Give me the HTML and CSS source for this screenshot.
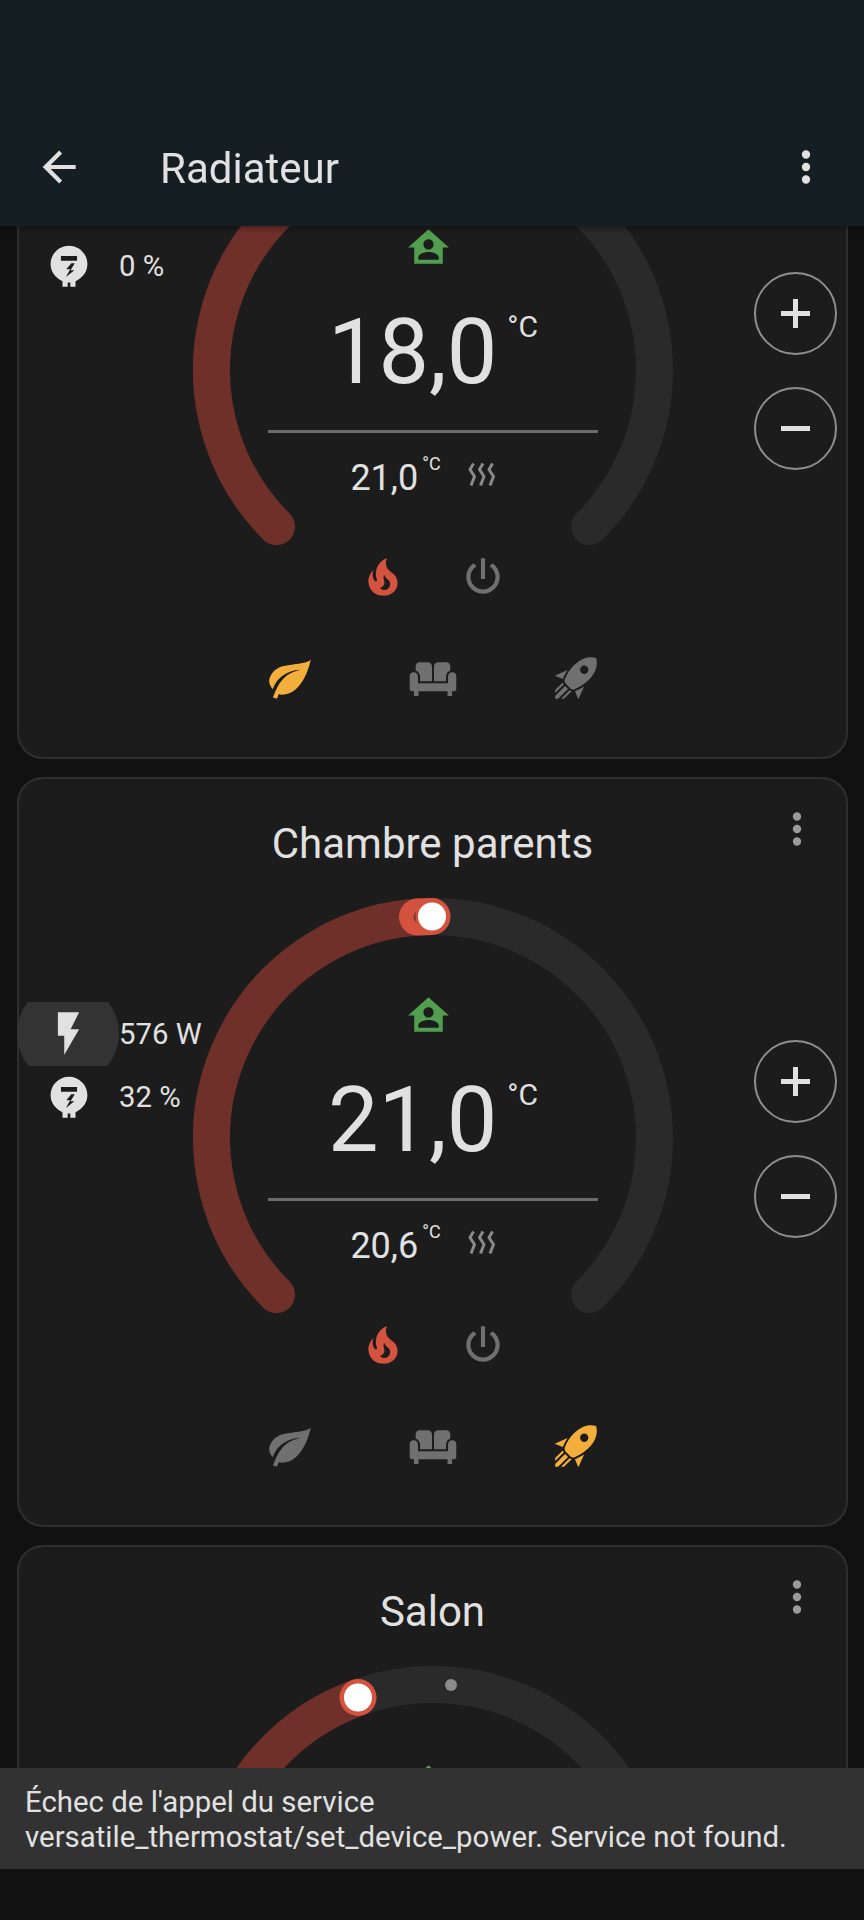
FILE: index.html
```html
<!DOCTYPE html>
<html lang="fr">
<head>
    <meta charset="UTF-8">
    <title>Radiateur</title>
    <link rel="stylesheet" href="styles.css">
</head>
<body>
    <svg class="defs" width="0" height="0">
        <symbol id="i-back" viewBox="0 0 24 24"><path d="M20,11V13H8L13.5,18.5L12.08,19.92L4.16,12L12.08,4.08L13.5,5.5L8,11H20Z"/></symbol>
        <symbol id="i-dots" viewBox="0 0 24 24"><path d="M12,16A2,2 0 0,1 14,18A2,2 0 0,1 12,20A2,2 0 0,1 10,18A2,2 0 0,1 12,16M12,10A2,2 0 0,1 14,12A2,2 0 0,1 12,14A2,2 0 0,1 10,12A2,2 0 0,1 12,10M12,4A2,2 0 0,1 14,6A2,2 0 0,1 12,8A2,2 0 0,1 10,6A2,2 0 0,1 12,4Z"/></symbol>
        <symbol id="i-flash" viewBox="0 0 24 24"><path d="M7,2V13H10V22L17,10H13L17,2H7Z"/></symbol>
        <symbol id="i-meter" viewBox="0 0 24 24"><path fill-rule="evenodd" d="M12 1.4C17.3 1.4 21.6 5.7 21.6 11C21.6 14.8 19.4 18 15.4 20V22.8H12.7V20.6H11.3V22.8H8.6V20C4.6 18 2.4 14.8 2.4 11C2.4 5.7 6.7 1.4 12 1.4ZM7.8 6.8V9.3H16.2V6.8ZM13.2 10.5L10.6 13.7H12.6L10.4 17.8L14.8 14.2H12.8L15 10.5Z"/></symbol>
        <symbol id="i-home" viewBox="0 0 24 24"><path fill-rule="evenodd" d="M12 3L2 12H5V20H19V12H22ZM12 8C13.4 8 14.5 9.1 14.5 10.5C14.5 11.9 13.4 13 12 13C10.6 13 9.5 11.9 9.5 10.5C9.5 9.1 10.6 8 12 8ZM7 18V16.8C7 15.1 10.3 14.2 12 14.2C13.7 14.2 17 15.1 17 16.8V18Z"/></symbol>
        <symbol id="i-fire" viewBox="0 0 24 24"><path d="M17.66 11.2C17.43 10.9 17.15 10.64 16.89 10.38C16.22 9.78 15.46 9.35 14.82 8.72C13.33 7.26 13 4.85 13.95 3C13 3.23 12.17 3.75 11.46 4.32C8.87 6.4 7.85 10.07 9.07 13.22C9.11 13.32 9.15 13.42 9.15 13.55C9.15 13.77 9 13.97 8.8 14.05C8.57 14.15 8.33 14.09 8.14 13.93C8.08 13.88 8.04 13.83 8 13.76C6.87 12.33 6.69 10.28 7.45 8.64C5.78 10 4.87 12.3 5 14.47C5.06 14.97 5.12 15.47 5.29 15.97C5.43 16.57 5.7 17.17 6 17.7C7.08 19.43 8.95 20.67 10.96 20.92C13.1 21.19 15.39 20.8 17.03 19.32C18.86 17.66 19.5 15 18.56 12.72L18.43 12.46C18.22 12 17.66 11.2 17.66 11.2M14.5 17.5C14.22 17.74 13.76 18 13.4 18.1C12.28 18.5 11.16 17.94 10.5 17.28C11.69 17 12.4 16.12 12.61 15.23C12.78 14.43 12.46 13.77 12.33 13C12.21 12.26 12.23 11.63 12.5 10.94C12.69 11.32 12.89 11.7 13.13 12C13.9 13 15.11 13.44 15.37 14.8C15.41 14.94 15.43 15.08 15.43 15.23C15.46 16.05 15.1 16.95 14.5 17.5H14.5Z"/></symbol>
        <symbol id="i-power" viewBox="0 0 24 24"><path d="M16.56,5.44L15.11,6.89C16.84,7.94 18,9.83 18,12A6,6 0 0,1 12,18A6,6 0 0,1 6,12C6,9.83 7.16,7.94 8.88,6.88L7.44,5.44C5.36,6.88 4,9.28 4,12A8,8 0 0,0 12,20A8,8 0 0,0 20,12C20,9.28 18.64,6.88 16.56,5.44M13,3H11V13H13"/></symbol>
        <symbol id="i-leaf" viewBox="0 0 24 24"><path d="M17,8C8,10 5.9,16.17 3.82,21.34L5.71,22L6.66,19.7C7.14,19.87 7.64,20 8,20C19,20 22,3 22,3C21,5 14,5.25 9,6.25C4,7.25 2,11.5 2,13.5C2,15.5 3.75,17.25 3.75,17.25C7,8 17,8 17,8Z"/></symbol>
        <symbol id="i-sofa" viewBox="0 0 50 50">
            <path d="M11.5 9.3H19.5C22.3 9.3 24 11 24 13.5V28.3H12V24C12 21 10.5 18.5 7.7 17.5V13.5C7.7 11 9 9.3 11.5 9.3Z"/>
            <path d="M38.5 9.3H30.5C27.7 9.3 26 11 26 13.5V28.3H38V24C38 21 39.5 18.5 42.3 17.5V13.5C42.3 11 41 9.3 38.5 9.3Z"/>
            <path d="M1.7 23C1.7 20.5 3.5 19.3 5.5 19.3C8.5 19.3 10 21 10 24V30.3H40V24C40 21 41.5 19.3 44.5 19.3C46.5 19.3 48.3 20.5 48.3 23V36C48.3 37.5 47 38.3 45 38.3H44V43H39.5V38.3H10.5V43H6V38.3H5C3 38.3 1.7 37.5 1.7 36Z"/>
        </symbol>
        <symbol id="i-rocket" viewBox="0 0 24 24"><path d="M13.13 22.19L11.5 18.36C13.07 17.78 14.54 17 15.9 16.09L13.13 22.19M5.64 12.5L1.81 10.87L7.91 8.1C7 9.46 6.22 10.93 5.64 12.5M21.61 2.39C21.61 2.39 16.66 .269 11 5.93C8.81 8.12 7.5 10.53 6.65 12.64C6.37 13.39 6.56 14.21 7.11 14.77L9.24 16.89C9.79 17.45 10.61 17.63 11.36 17.35C13.5 16.53 15.88 15.19 18.07 13C23.73 7.34 21.61 2.39 21.61 2.39M14.54 9.46C13.76 8.68 13.76 7.41 14.54 6.63S16.59 5.85 17.37 6.63C18.14 7.41 18.15 8.68 17.37 9.46C16.59 10.24 15.32 10.24 14.54 9.46M6.24 22L9.88 18.36C9.54 18.27 9.21 18.12 8.91 17.91L4.83 22H6.24M2 22H3.41L8.18 17.24L6.76 15.83L2 20.59V22M2 19.17L6.09 15.09C5.88 14.79 5.73 14.47 5.64 14.12L2 17.76V19.17Z"/></symbol>
        <symbol id="i-heat" viewBox="0 0 27 25"><path d="M5.5 1.5L2 7.5L6.5 14.5L3 23.5M15 1.5L11.5 7.5L16 14.5L12.5 23.5M24.5 1.5L21 7.5L25.5 14.5L22 23.5"/></symbol>
    </svg>

    <header class="topbar">
        <svg class="ic-50 back"><use href="#i-back"/></svg>
        <h1 class="page-title">Radiateur</h1>
        <svg class="ic-50"><use href="#i-dots"/></svg>
    </header>

    <main class="cards">
        <section class="card">
            <h2 class="card-title">Chambre</h2>
            <svg class="ic-50 card-more"><use href="#i-dots"/></svg>
            <div class="card-body">
                <div class="attrs">
                    <div class="attr"><span class="attr-icon"><svg class="ic-meter"><use href="#i-meter"/></svg></span><span>0 %</span></div>
                </div>
                <div class="gauge">
                    <svg class="dial" viewBox="0 0 480 420">
                        <path class="track" d="M83.4 396.6A221.5 221.5 0 1 1 396.6 396.6"/>
                        <path class="heat-low" d="M83.4 396.6A221.5 221.5 0 0 1 165 31.5"/>
                    </svg>
                    <div class="info">
                        <svg class="ic-home"><use href="#i-home"/></svg>
                        <div class="target"><span class="target-val">18,0</span><span class="target-unit">°C</span></div>
                        <div class="rule"></div>
                        <div class="current"><span class="current-val">21,0</span><span class="current-unit">°C</span><svg class="ic-heat"><use href="#i-heat"/></svg></div>
                    </div>
                </div>
                <div class="steppers">
                    <div class="stepper plus"></div>
                    <div class="stepper"></div>
                </div>
            </div>
            <div class="modes">
                <svg class="ic-50 red"><use href="#i-fire"/></svg>
                <svg class="ic-50 off"><use href="#i-power"/></svg>
            </div>
            <div class="presets">
                <svg class="ic-50 amber"><use href="#i-leaf"/></svg>
                <svg class="ic-50 off"><use href="#i-sofa"/></svg>
                <svg class="ic-50 off"><use href="#i-rocket"/></svg>
            </div>
        </section>

        <section class="card">
            <h2 class="card-title">Chambre parents</h2>
            <svg class="ic-50 card-more"><use href="#i-dots"/></svg>
            <div class="card-body">
                <div class="attrs">
                    <div class="attr"><span class="attr-icon pressed"><svg class="ic-flash"><use href="#i-flash"/></svg></span><span>576 W</span></div>
                    <div class="attr"><span class="attr-icon"><svg class="ic-meter"><use href="#i-meter"/></svg></span><span>32 %</span></div>
                </div>
                <div class="gauge">
                    <svg class="dial" viewBox="0 0 480 420">
                        <path class="track" d="M83.4 396.6A221.5 221.5 0 1 1 396.6 396.6"/>
                        <path class="heat-low" d="M83.4 396.6A221.5 221.5 0 0 1 239 18.5"/>
                        <path class="heat-on" d="M224.5 19A221.5 221.5 0 0 1 239 18.5"/>
                        <circle class="now-dim" cx="227" cy="19" r="6.5"/>
                        <circle class="ring" cx="239" cy="18.5" r="16.5"/>
                        <circle class="thumb" cx="239" cy="18.5" r="14"/>
                    </svg>
                    <div class="info">
                        <svg class="ic-home"><use href="#i-home"/></svg>
                        <div class="target"><span class="target-val">21,0</span><span class="target-unit">°C</span></div>
                        <div class="rule"></div>
                        <div class="current"><span class="current-val">20,6</span><span class="current-unit">°C</span><svg class="ic-heat"><use href="#i-heat"/></svg></div>
                    </div>
                </div>
                <div class="steppers">
                    <div class="stepper plus"></div>
                    <div class="stepper"></div>
                </div>
            </div>
            <div class="modes">
                <svg class="ic-50 red"><use href="#i-fire"/></svg>
                <svg class="ic-50 off"><use href="#i-power"/></svg>
            </div>
            <div class="presets">
                <svg class="ic-50 off"><use href="#i-leaf"/></svg>
                <svg class="ic-50 off"><use href="#i-sofa"/></svg>
                <svg class="ic-50 amber"><use href="#i-rocket"/></svg>
            </div>
        </section>

        <section class="card">
            <h2 class="card-title">Salon</h2>
            <svg class="ic-50 card-more"><use href="#i-dots"/></svg>
            <div class="card-body">
                <div class="attrs"></div>
                <div class="gauge">
                    <svg class="dial" viewBox="0 0 480 420">
                        <path class="track" d="M83.4 396.6A221.5 221.5 0 1 1 396.6 396.6"/>
                        <path class="heat-low" d="M83.4 396.6A221.5 221.5 0 0 1 165 31.5"/>
                        <circle class="now" cx="258" cy="19" r="6"/>
                        <circle class="ring" cx="165" cy="31.5" r="18.5"/>
                        <circle class="thumb" cx="165" cy="31.5" r="14"/>
                    </svg>
                    <div class="info">
                        <svg class="ic-home"><use href="#i-home"/></svg>
                    </div>
                </div>
            </div>
        </section>
    </main>

    <div class="toast">Échec de l'appel du service versatile_thermostat/set_device_power. Service not found.</div>
    <div class="navbar"></div>
</body>
</html>
```

FILE: styles.css
```css
* {
    box-sizing: border-box;
}

html, body {
    height: 100%;
}

body {
    margin: 0;
    background-color: #111111;
    color: #e1e1e1;
    font-family: Roboto, "Noto Sans", sans-serif;
    overflow: hidden;
}

svg {
    fill: currentColor;
    display: block;
}

.defs {
    position: absolute;
}

.ic-50 {
    width: 50px;
    height: 50px;
    flex: none;
}

.red { color: #d4533f; }
.off { color: #707070; }
.amber { color: #f4ae3c; }

/* top bar sits over the scrolled cards */
.topbar {
    position: fixed;
    top: 0;
    left: 0;
    right: 0;
    height: 226px;
    z-index: 5;
    display: flex;
    align-items: flex-end;
    padding: 0 33px 34px 34px;
    background-color: #141e23;
    box-shadow: 0 2px 6px rgba(0, 0, 0, 0.4);
}

.page-title {
    flex: 1;
    margin: 0 0 -2px 76px;
    font-size: 42px;
    font-weight: 400;
    line-height: 50px;
}

.cards {
    display: flex;
    flex-direction: column;
    gap: 18px;
    padding: 9px 16px 0 17px;
}

.card {
    position: relative;
    flex: none;
    height: 750px;
    background-color: #1c1c1c;
    border: 2px solid #2f2f2f;
    border-radius: 26px;
}

.card-title {
    height: 119px;
    margin: 0;
    padding-top: 40px;
    text-align: center;
    font-size: 42px;
    font-weight: 400;
    line-height: 50px;
}

.card-more {
    position: absolute;
    top: 25px;
    right: 24px;
    color: #9b9b9b;
}

.card-body {
    display: grid;
    grid-template-columns: 174px 480px 1fr;
    height: 422px;
}

.attrs {
    margin-left: -2px;
    padding-top: 104px;
}

.attr {
    display: flex;
    align-items: center;
    height: 63px;
    font-size: 29.3px;
    white-space: nowrap;
}

.attr-icon {
    display: flex;
    align-items: center;
    justify-content: center;
    width: 102px;
    height: 64px;
    flex: none;
}

.pressed {
    background-color: #333333;
    clip-path: circle(51px at center);
}

.ic-flash {
    width: 51px;
    height: 51px;
}

.ic-meter {
    width: 46px;
    height: 46px;
    margin-left: 2px;
}

.gauge {
    position: relative;
}

.dial {
    position: absolute;
    top: 0;
    left: 0;
    width: 480px;
    height: 420px;
}

.dial path {
    fill: none;
    stroke-width: 37;
    stroke-linecap: round;
}

.dial .track { stroke: #2a2a2a; }
.dial .heat-low { stroke: #6f302a; }
.dial .heat-on { stroke: #d4533f; }
.dial .now-dim { fill: #6b3a30; }
.dial .now { fill: #8b8b8b; }
.dial .ring { fill: #d4533f; }
.dial .thumb { fill: #ffffff; }

.info {
    position: relative;
    display: flex;
    flex-direction: column;
    align-items: center;
    padding-top: 93px;
}

.ic-home {
    width: 49px;
    height: 49px;
    margin-right: 10px;
    color: #519e4e;
}

.target {
    display: flex;
    margin-top: 31px;
    height: 100px;
    line-height: 100px;
}

.target-val {
    font-size: 90px;
}

.target-unit {
    margin: -26px 0 0 10px;
    font-size: 30px;
}

.rule {
    width: 330px;
    height: 3px;
    margin-top: 27px;
    background-color: #6c6c6c;
}

.current {
    display: flex;
    margin: 20px 21px 0 0;
    height: 50px;
    line-height: 50px;
}

.current-val {
    font-size: 36px;
}

.current-unit {
    margin: -14px 0 0 4px;
    font-size: 18px;
}

.ic-heat {
    width: 27px;
    height: 25px;
    margin: 9px 0 0 27px;
    fill: none;
    stroke: #8a8a8a;
    stroke-width: 3;
    stroke-linejoin: round;
}

.steppers {
    display: flex;
    flex-direction: column;
    gap: 32px;
    padding: 142px 0 0 81px;
}

.stepper {
    position: relative;
    width: 83px;
    height: 83px;
    border: 2px solid #8e8e8e;
    border-radius: 50%;
}

.stepper::before, .plus::after {
    content: "";
    position: absolute;
    top: 37px;
    left: 25px;
    width: 29px;
    height: 5px;
    background-color: #e1e1e1;
}

.plus::after {
    top: 25px;
    left: 37px;
    width: 5px;
    height: 29px;
}

.modes {
    display: flex;
    justify-content: center;
    gap: 50px;
    height: 50px;
}

.presets {
    display: flex;
    justify-content: center;
    gap: 93px;
    margin-top: 51px;
}

.toast {
    position: fixed;
    left: 0;
    right: 0;
    top: 1768px;
    height: 101px;
    z-index: 6;
    padding: 17px 60px 0 25px;
    background-color: #323232;
    font-size: 29.4px;
    line-height: 35px;
}

.navbar {
    position: fixed;
    left: 0;
    right: 0;
    top: 1869px;
    bottom: 0;
    z-index: 6;
    background-color: #111111;
}
```
